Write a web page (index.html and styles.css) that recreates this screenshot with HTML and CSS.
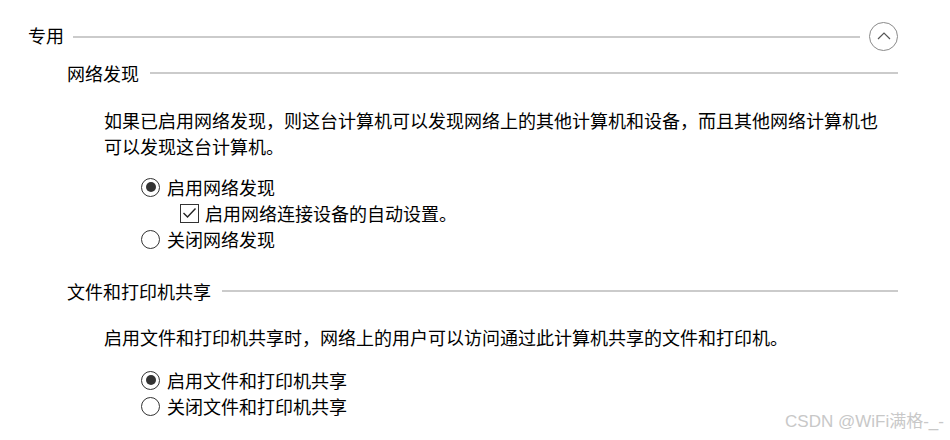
FILE: index.html
```html
<!DOCTYPE html>
<html>
<head lang="zh-CN">
    <meta charset="UTF-8">
    <title>高级共享设置</title>
    <link rel="stylesheet" href="styles.css">
</head>
<body>

<div class="page">
    <!-- 专用 -->
    <div class="group-head">
        <span class="group-title">专用</span>
        <span class="rule"></span>
        <span class="collapse">
            <svg width="14" height="8" viewBox="0 0 14 8"><path d="M1 7 L7 1 L13 7" fill="none" stroke="#555" stroke-width="1.2"/></svg>
        </span>
    </div>

    <div class="sub-head first">
        <span class="sub-title">网络发现</span>
        <span class="rule"></span>
    </div>
    <p class="desc">如果已启用网络发现，则这台计算机可以发现网络上的其他计算机和设备，而且其他网络计算机也可以发现这台计算机。</p>
    <div class="options">
        <div class="opt"><span class="radio on"></span>启用网络发现</div>
        <div class="opt sub-opt">
            <span class="check">
                <svg width="15" height="12" viewBox="0 0 15 12"><path d="M1.5 6 L5.5 10 L13.5 1.5" fill="none" stroke="#222" stroke-width="1.4"/></svg>
            </span>启用网络连接设备的自动设置。
        </div>
        <div class="opt"><span class="radio"></span>关闭网络发现</div>
    </div>

    <div class="sub-head second">
        <span class="sub-title">文件和打印机共享</span>
        <span class="rule"></span>
    </div>
    <p class="desc desc2">启用文件和打印机共享时，网络上的用户可以访问通过此计算机共享的文件和打印机。</p>
    <div class="options options2">
        <div class="opt"><span class="radio on"></span>启用文件和打印机共享</div>
        <div class="opt"><span class="radio"></span>关闭文件和打印机共享</div>
    </div>
</div>

<div class="mark">CSDN @WiFi满格-_-</div>

</body>
</html>
```

FILE: styles.css
```css
* {
    margin: 0;
    padding: 0;
}

body {
    width: 950px;
    height: 440px;
    background: #fff;
    color: #000;
    font-family: "Noto Sans CJK SC", "Microsoft YaHei", sans-serif;
    font-size: 18px;
    line-height: 26px;
    position: relative;
    overflow: hidden;
}

.page {
    padding: 22px 52px 0 28px;
}

/* 大标题 */
.group-head {
    display: flex;
    align-items: center;
    height: 29px;
}

.group-title {
    margin-right: 9px;
    position: relative;
    top: -2px;
}

.rule {
    flex: 1;
    height: 2px;
    background: #cbcbcb;
}

.collapse {
    width: 27px;
    height: 27px;
    border: 1px solid #8a8a8a;
    border-radius: 50%;
    margin-left: 9px;
    display: flex;
    align-items: center;
    justify-content: center;
}

.collapse svg {
    margin-top: -2px;
}

/* 小标题 */
.sub-head {
    display: flex;
    align-items: center;
    margin-left: 39px;
    height: 26px;
}

.sub-head.first {
    margin-top: 9px;
}

.sub-head.second {
    margin-top: 26px;
}

.sub-title {
    margin-right: 11px;
}

.desc {
    margin: 21px 0 0 76px;
    width: 782px;
}

.desc2 {
    margin-top: 20px;
}

.options {
    margin: 15px 0 0 113px;
}

.options2 {
    margin-top: 17px;
}

.opt {
    display: flex;
    align-items: center;
    height: 26px;
}

.sub-opt {
    padding-left: 39px;
}

.radio {
    width: 17px;
    height: 17px;
    border: 1px solid #333;
    border-radius: 50%;
    margin-right: 7px;
    display: flex;
    align-items: center;
    justify-content: center;
}

.radio.on::after {
    content: "";
    width: 10px;
    height: 10px;
    border-radius: 50%;
    background: #333;
}

.check {
    width: 17px;
    height: 17px;
    border: 1px solid #333;
    margin-right: 6px;
    display: flex;
    align-items: center;
    justify-content: center;
}

/* 水印 */
.mark {
    position: absolute;
    right: 6px;
    bottom: 8px;
    font-family: "Liberation Sans", "Noto Sans CJK SC", sans-serif;
    font-size: 17px;
    color: #c8c8c8;
    line-height: 20px;
}
```
